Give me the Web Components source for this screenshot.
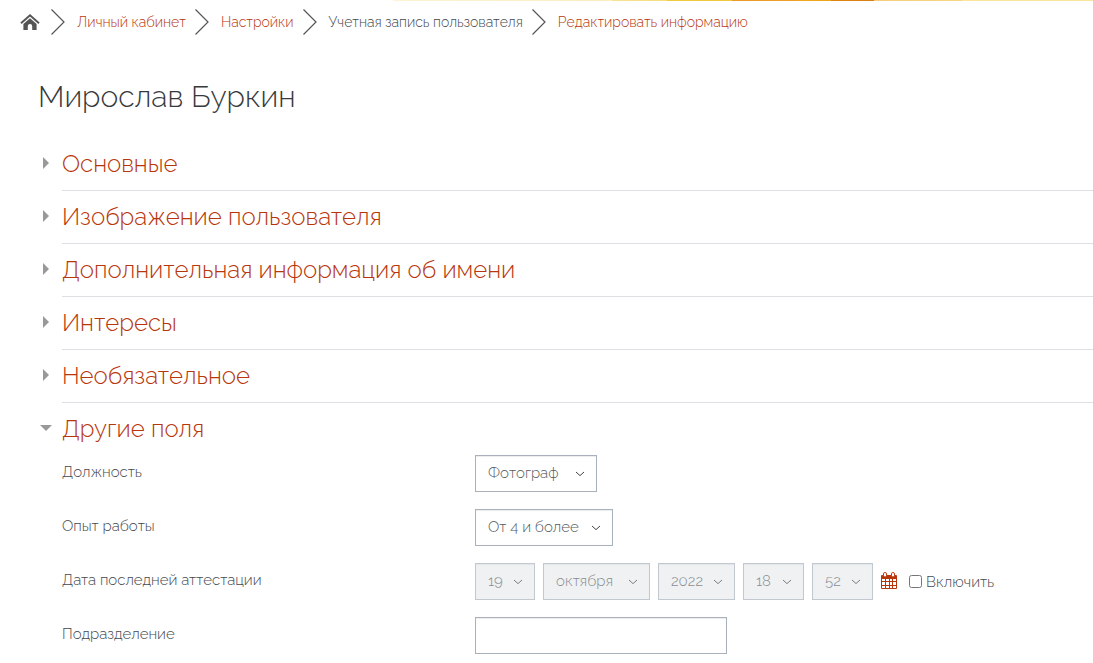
<!DOCTYPE html>
<html lang="ru">
<head>
  <meta charset="utf-8">
  <meta name="viewport" content="width=device-width, initial-scale=1">
  <title>Редактировать информацию</title>
  <style>
    body {
      margin: 0;
      background: #fff;
      color: #43484d;
      font-family: Raleway, "Open Sans", sans-serif;
      font-size: 14px;
      font-weight: 300;
      line-height: 20px;
    }
  </style>
</head>
<body>
  <accent-strip></accent-strip>

  <crumb-trail>
    <crumb-item href="#my">Личный кабинет</crumb-item>
    <crumb-item href="#settings">Настройки</crumb-item>
    <crumb-item>Учетная запись пользователя</crumb-item>
    <crumb-item href="#edit">Редактировать информацию</crumb-item>
  </crumb-trail>

  <profile-page name="Мирослав Буркин">
    <form-section heading="Основные"></form-section>
    <form-section heading="Изображение пользователя"></form-section>
    <form-section heading="Дополнительная информация об имени"></form-section>
    <form-section heading="Интересы"></form-section>
    <form-section heading="Необязательное"></form-section>
    <form-section heading="Другие поля" open>
      <select-field label="Должность" value="Фотограф" width="122"></select-field>
      <select-field label="Опыт работы" value="От 4 и более" width="138"></select-field>
      <date-field label="Дата последней аттестации"></date-field>
      <text-field label="Подразделение"></text-field>
    </form-section>
  </profile-page>

  <script>
    const fieldStyles = `
      :host {
        display: grid;
        grid-template-columns: minmax(120px, 413px) 1fr;
        align-items: center;
        font-size: 15px;
      }

      .title {
        padding-bottom: 4px;
      }

      .controls {
        display: flex;
        flex-wrap: wrap;
        align-items: center;
        gap: 8px;
      }

      select,
      input[type="text"] {
        box-sizing: border-box;
        height: 37px;
        margin: 0;
        border: 1px solid #a9b2bc;
        border-radius: 0;
        background-color: #fff;
        box-shadow: inset 0 1px 1px rgba(0,0,0,0.08);
        color: #555a60;
        font: inherit;
      }

      select {
        appearance: none;
        padding: 0 20px 2px 12px;
        background-image: url("data:image/svg+xml,%3Csvg xmlns='http://www.w3.org/2000/svg' width='10' height='6' fill='none' stroke='%23444' stroke-width='1'%3E%3Cpath d='M1 1l4 3.6L9 1'/%3E%3C/svg%3E");
        background-repeat: no-repeat;
        background-position: right 11px center;
      }

      select:disabled {
        background-color: #e9ecef;
        opacity: 0.7;
      }

      input[type="text"] {
        width: 252px;
        padding: 0 12px;
      }
    `;

    class AccentStrip extends HTMLElement {
      connectedCallback() {
        this.attachShadow({ mode: "open" });
        this.shadowRoot.innerHTML = `
          <style>
            :host {
              display: block;
              height: 1px;
              background: linear-gradient(to right,
                #fff 36%, #fdf4d6 36%, #faedbe 56%,
                #f6e296 56%, #f5dc7c 61%,
                #efcb40 61%, #f0c93c 67%,
                #eb9a28 67%, #ee9f2c 73%,
                #efa91c 73%, #eda41a 76%,
                #df8412 76%, #dc7f14 80%,
                #f5ce7c 80%, #f7d684 88%,
                #f9e59c 88%);
            }
          </style>
        `;
      }
    }

    class CrumbTrail extends HTMLElement {
      connectedCallback() {
        this.attachShadow({ mode: "open" });
        this.shadowRoot.innerHTML = `
          <style>
            :host {
              display: block;
            }

            nav {
              display: flex;
              flex-wrap: wrap;
              align-items: center;
              gap: 9px;
              padding: 8px 20px;
            }

            .home {
              display: flex;
              padding: 0 2px 2px 0;
              color: #555;
            }
          </style>

          <nav aria-label="Навигация">
            <a class="home" href="#home" aria-label="В начало">
              <svg width="20" height="17" viewBox="0 0 20 17" aria-hidden="true">
                <path d="M1 10.2 10 2.2l9 8" fill="none" stroke="currentColor" stroke-width="1.9"/>
                <path d="M3.4 11 10 5.2l6.6 5.8v6h-4.4v-3.8a2.2 2.2 0 0 0-4.4 0V17H3.4z" fill="currentColor"/>
              </svg>
            </a>
            <slot></slot>
          </nav>
        `;
      }
    }

    class CrumbItem extends HTMLElement {
      connectedCallback() {
        const href = this.getAttribute("href");
        this.attachShadow({ mode: "open" });
        this.shadowRoot.innerHTML = `
          <style>
            :host {
              display: flex;
              align-items: center;
              gap: 12px;
            }

            a {
              color: #b8360b;
              text-decoration: none;
            }

            a:hover {
              text-decoration: underline;
            }
          </style>

          <svg width="14" height="26" viewBox="0 0 14 26" aria-hidden="true">
            <path d="M.5.5 13 13 .5 25.5" fill="none" stroke="#555" stroke-width="1.2"/>
          </svg>
          ${href ? `<a href="${href}"><slot></slot></a>` : `<span><slot></slot></span>`}
        `;
      }
    }

    class ProfilePage extends HTMLElement {
      connectedCallback() {
        this.attachShadow({ mode: "open" });
        this.shadowRoot.innerHTML = `
          <style>
            :host {
              display: block;
              padding: 34px 0 8px 38px;
            }

            h1 {
              margin: 0 0 21px;
              color: #373a3c;
              font-size: 30px;
              font-weight: 300;
              line-height: 40px;
            }
          </style>

          <h1>${this.getAttribute("name")}</h1>
          <form><slot></slot></form>
        `;
      }
    }

    class FormSection extends HTMLElement {
      connectedCallback() {
        this.attachShadow({ mode: "open" });
        this.shadowRoot.innerHTML = `
          <style>
            :host {
              display: block;
              margin-left: 24px;
              border-bottom: 1px solid #dddfe3;
            }

            :host([open]) {
              border-bottom: 0;
            }

            h2 {
              margin: 0 0 0 -24px;
              font-size: 24px;
              font-weight: 300;
              line-height: 52px;
            }

            button {
              display: grid;
              grid-template-columns: 16px auto;
              align-items: center;
              gap: 8px;
              padding: 0;
              border: 0;
              background: none;
              color: #b8360b;
              font: inherit;
              cursor: pointer;
            }

            svg {
              width: 16px;
              height: 16px;
              margin-bottom: 2px;
              fill: #999;
            }

            :host([open]) svg {
              transform: rotate(90deg);
            }

            .body {
              display: none;
            }

            :host([open]) .body {
              display: grid;
              gap: 17px;
            }
          </style>

          <h2>
            <button type="button">
              <svg viewBox="0 0 16 16" aria-hidden="true"><path d="M5 2l6 6-6 6z"/></svg>
              <span>${this.getAttribute("heading")}</span>
            </button>
          </h2>
          <div class="body"><slot></slot></div>
        `;

        const button = this.shadowRoot.querySelector("button");
        button.setAttribute("aria-expanded", String(this.hasAttribute("open")));
        button.addEventListener("click", () => {
          const isOpen = this.toggleAttribute("open");
          button.setAttribute("aria-expanded", String(isOpen));
        });
      }
    }

    class SelectField extends HTMLElement {
      connectedCallback() {
        this.attachShadow({ mode: "open" });
        this.shadowRoot.innerHTML = `
          <style>
            ${fieldStyles}
            select { width: ${this.getAttribute("width")}px; }
          </style>

          <label class="title" for="control">${this.getAttribute("label")}</label>
          <div class="controls">
            <select id="control"><option>${this.getAttribute("value")}</option></select>
          </div>
        `;
      }
    }

    class DateField extends HTMLElement {
      connectedCallback() {
        this.attachShadow({ mode: "open" });
        this.shadowRoot.innerHTML = `
          <style>
            ${fieldStyles}

            .day { width: 60px; }
            .month { width: 107px; }
            .year { width: 77px; }
            .time { width: 61px; }

            .calendar {
              display: flex;
              padding-bottom: 2px;
              color: #b8360b;
            }

            .enable {
              display: flex;
              align-items: center;
              gap: 4px;
              margin-left: 4px;
            }

            .enable input {
              width: 13px;
              height: 13px;
              margin: 0;
            }
          </style>

          <span class="title" id="title">${this.getAttribute("label")}</span>
          <div class="controls" role="group" aria-labelledby="title">
            <select class="day" aria-label="День" disabled><option>19</option></select>
            <select class="month" aria-label="Месяц" disabled><option>октября</option></select>
            <select class="year" aria-label="Год" disabled><option>2022</option></select>
            <select class="time" aria-label="Час" disabled><option>18</option></select>
            <select class="time" aria-label="Минута" disabled><option>52</option></select>
            <a class="calendar" href="#calendar" aria-label="Календарь">
              <svg width="16" height="17" viewBox="0 0 16 17" aria-hidden="true">
                <path d="M1 3h14a1 1 0 0 1 1 1v12a1 1 0 0 1-1 1H1a1 1 0 0 1-1-1V4a1 1 0 0 1 1-1z" fill="currentColor"/>
                <path d="M1 7h3v2H1zM5 7h3v2H5zM9 7h2v2H9zM12 7h3v2h-3zM1 10h3v3H1zM5 10h3v3H5zM9 10h2v3H9zM12 10h3v3h-3zM1 14h3v2H1zM5 14h3v2H5zM9 14h2v2H9zM12 14h3v2h-3z" fill="#fff"/>
                <rect x="2.5" y=".5" width="3" height="4.5" rx="1.4" fill="#fff" stroke="currentColor"/>
                <rect x="10.5" y=".5" width="3" height="4.5" rx="1.4" fill="#fff" stroke="currentColor"/>
              </svg>
            </a>
            <label class="enable"><input type="checkbox">Включить</label>
          </div>
        `;
      }
    }

    class TextField extends HTMLElement {
      connectedCallback() {
        this.attachShadow({ mode: "open" });
        this.shadowRoot.innerHTML = `
          <style>${fieldStyles}</style>

          <label class="title" for="control">${this.getAttribute("label")}</label>
          <div class="controls">
            <input id="control" type="text">
          </div>
        `;
      }
    }

    customElements.define("accent-strip", AccentStrip);
    customElements.define("crumb-trail", CrumbTrail);
    customElements.define("crumb-item", CrumbItem);
    customElements.define("profile-page", ProfilePage);
    customElements.define("form-section", FormSection);
    customElements.define("select-field", SelectField);
    customElements.define("date-field", DateField);
    customElements.define("text-field", TextField);
  </script>
</body>
</html>
